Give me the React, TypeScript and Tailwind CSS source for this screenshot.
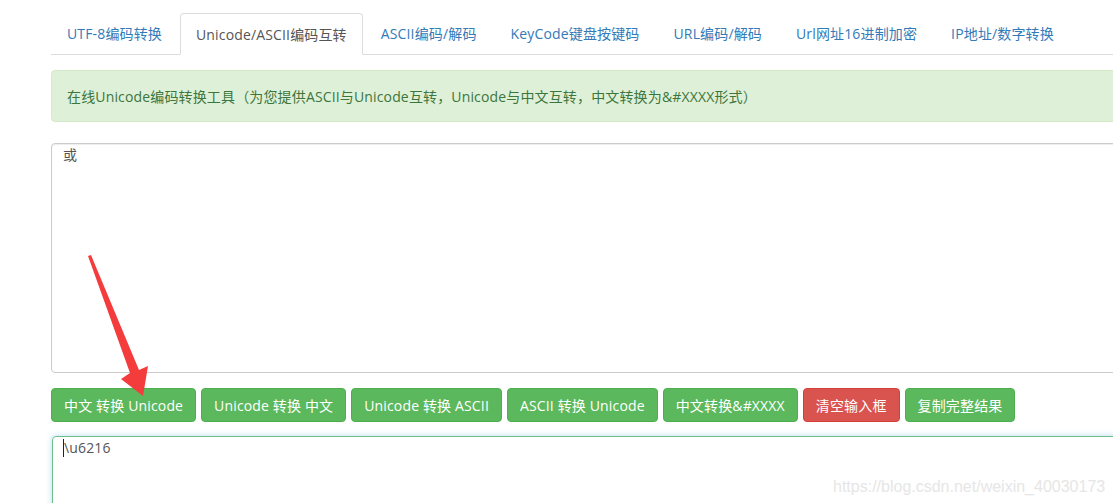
const tabs = [
  "UTF-8编码转换",
  "Unicode/ASCII编码互转",
  "ASCII编码/解码",
  "KeyCode键盘按键码",
  "URL编码/解码",
  "Url网址16进制加密",
  "IP地址/数字转换",
];

const buttons = [
  { label: "中文 转换 Unicode", red: false },
  { label: "Unicode 转换 中文", red: false },
  { label: "Unicode 转换 ASCII", red: false },
  { label: "ASCII 转换 Unicode", red: false },
  { label: "中文转换&#XXXX", red: false },
  { label: "清空输入框", red: true },
  { label: "复制完整结果", red: false },
];

const font = {
  fontFamily: '"Open Sans", "Noto Sans CJK SC", sans-serif',
};

export default function App() {
  return (
    <div
      className="relative w-[1113px] h-[503px] overflow-hidden bg-white text-[14px] text-[#333] tracking-[0.15px]"
      style={font}
    >
      <div className="pl-[51px] pt-[13px] w-[1200px]">
        {/* tabs */}
        <ul className="flex border-b border-[#ddd] h-[42px]">
          {tabs.map((t, i) =>
            i === 1 ? (
              <li
                key={t}
                className="mr-[2px] -mb-px h-[42px] px-[15px] flex items-center bg-white border border-[#ddd] border-b-white rounded-t-[4px] text-[#555]"
              >
                {t}
              </li>
            ) : (
              <li
                key={t}
                className="mr-[2px] h-[41px] px-[15px] flex items-center border border-transparent text-[#337ab7]"
              >
                {t}
              </li>
            )
          )}
        </ul>

        {/* alert */}
        <div className="mt-[15px] h-[52px] px-[15px] flex items-center bg-[#dff0d8] border border-[#d6e9c6] rounded-[4px] text-[#3c763d]">
          在线Unicode编码转换工具（为您提供ASCII与Unicode互转，Unicode与中文互转，中文转换为&amp;#XXXX形式）
        </div>

        {/* input */}
        <div className="mt-[21px] h-[230px] border border-[#ccc] rounded-[4px] px-[11px] text-[#555] shadow-[inset_0_1px_1px_rgba(0,0,0,0.075)]">
          或
        </div>

        {/* buttons */}
        <div className="mt-[15px] flex gap-[5px]">
          {buttons.map((b) => (
            <div
              key={b.label}
              className={`h-[34px] px-[12px] flex items-center rounded-[4px] border text-white ${
                b.red
                  ? "bg-[#d9534f] border-[#d43f3a]"
                  : "bg-[#5cb85c] border-[#4cae4c]"
              }`}
            >
              {b.label}
            </div>
          ))}
        </div>

        {/* output */}
        <div className="mt-[14px] ml-px h-[120px] border border-[#6cbf88] rounded-[4px] px-[10px] text-[#555] shadow-[0_0_6px_rgba(102,175,233,0.45)] flex items-start">
          <span className="inline-block w-px h-[18px] bg-[#222] mt-[2px]" />
          <span>\u6216</span>
        </div>
      </div>

      {/* watermark */}
      <div
        className="absolute left-[833px] top-[475px] text-[16px] text-[#e6e6e6] tracking-normal"
        style={{ fontFamily: '"Liberation Sans", Arial, sans-serif', textShadow: "0 0 1px #fff" }}
      >
        https://blog.csdn.net/weixin_40030173
      </div>

      {/* red arrow annotation */}
      <svg
        className="absolute left-0 top-0 pointer-events-none"
        width="1113"
        height="503"
      >
        <polygon
          points="88,256 91,255 139,370 148,366 143,396 121,379 130,373"
          fill="#f43c3c"
        />
      </svg>
    </div>
  );
}
